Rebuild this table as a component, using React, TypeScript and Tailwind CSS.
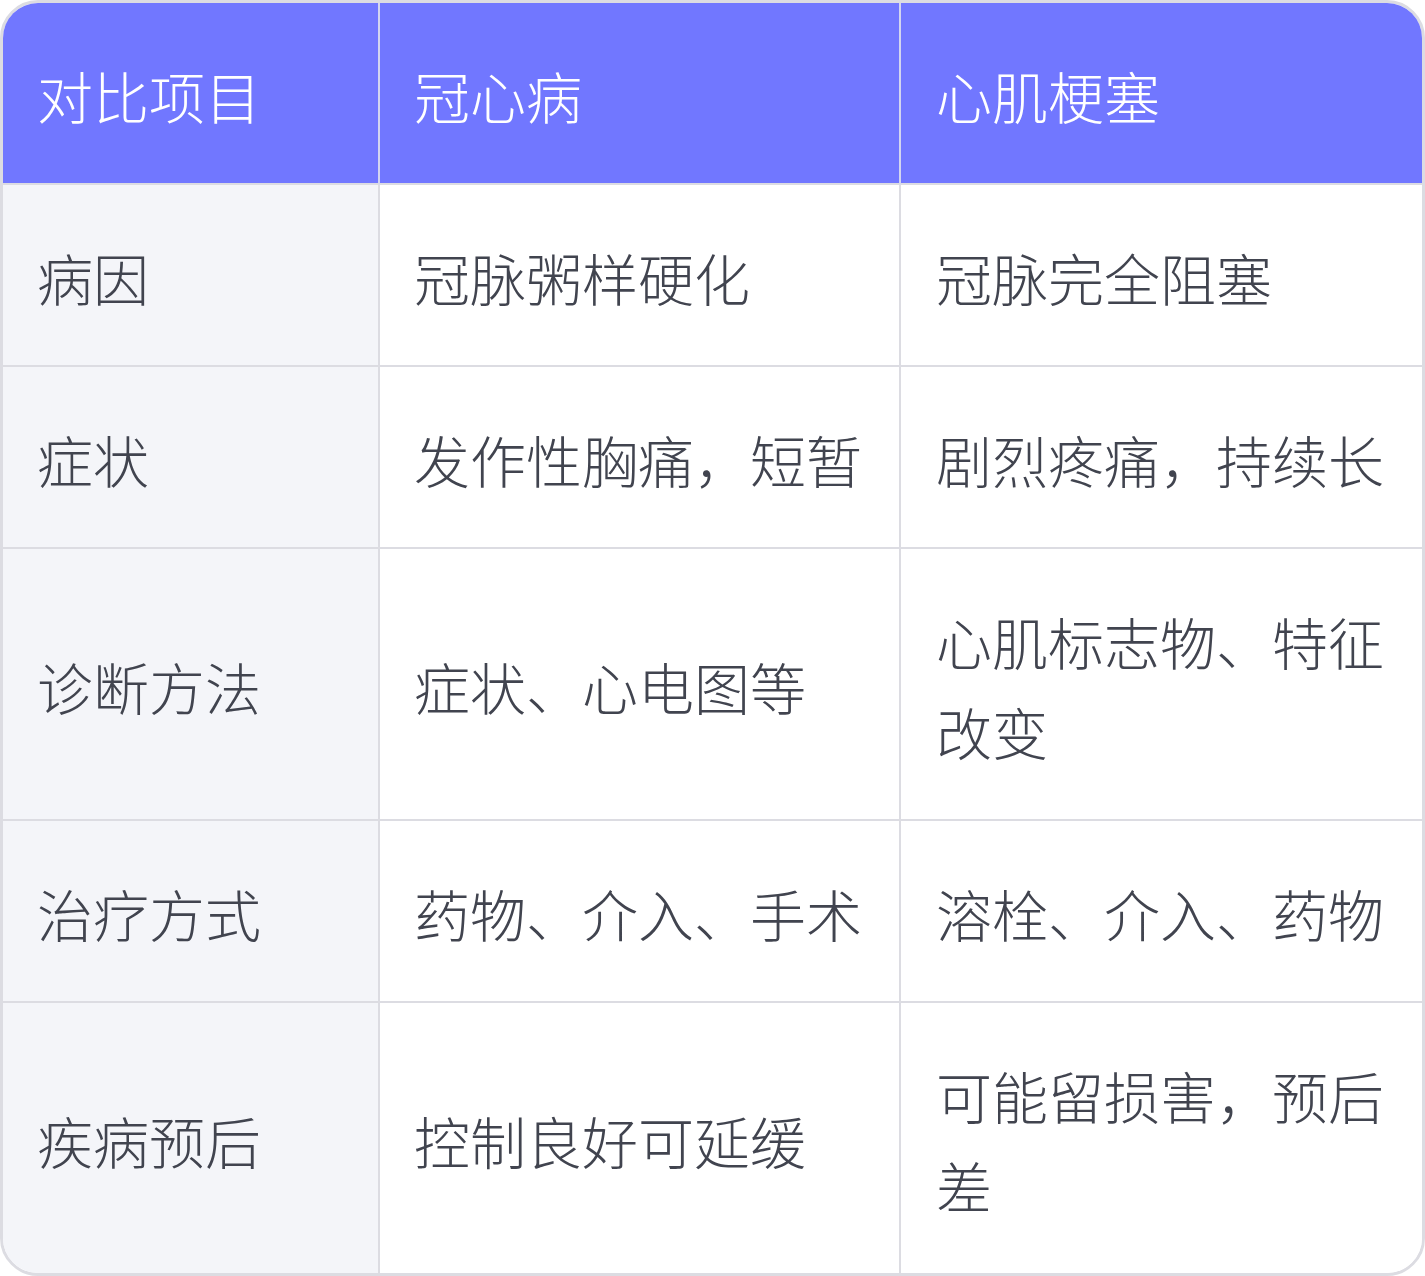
import React from "react";

const rows: [string, string, string][] = [
  ["病因", "冠脉粥样硬化", "冠脉完全阻塞"],
  ["症状", "发作性胸痛，短暂", "剧烈疼痛，持续长"],
  ["诊断方法", "症状、心电图等", "心肌标志物、特征改变"],
  ["治疗方式", "药物、介入、手术", "溶栓、介入、药物"],
  ["疾病预后", "控制良好可延缓", "可能留损害，预后差"],
];

export default function App() {
  return (
    <div
      className="w-[1425px] h-[1276px] bg-white"
      style={{ fontFamily: '"Noto Sans CJK SC", "Noto Sans", sans-serif' }}
    >
      <div className="w-[1425px] border-[3px] border-[#dcdce2] rounded-[38px] overflow-hidden bg-white">
        <div className="grid grid-cols-[377px_521px_1fr] text-[56px] leading-[90px] font-light">
          <div className="bg-[#7177ff] text-white pl-[34px] pr-[33px] pt-[47px] pb-[43px] border-r-2 border-b-2 border-r-[#d3d5f0] border-b-[#dcdce2]">
            对比项目
          </div>
          <div className="bg-[#7177ff] text-white pl-[34px] pr-[33px] pt-[47px] pb-[43px] border-r-2 border-b-2 border-r-[#d3d5f0] border-b-[#dcdce2]">
            冠心病
          </div>
          <div className="bg-[#7177ff] text-white pl-[35px] pr-[33px] pt-[47px] pb-[43px] border-b-2 border-b-[#dcdce2]">
            心肌梗塞
          </div>
          {rows.map((r, i) => {
            const last = i === rows.length - 1;
            return (
              <React.Fragment key={i}>
                <div
                  className={
                    "bg-[#f4f5f9] text-[#41444f] pl-[34px] pr-[33px] pt-[47px] pb-[43px] border-r-2 border-[#dcdce2] flex items-center " +
                    (last ? "" : "border-b-2")
                  }
                >
                  {r[0]}
                </div>
                <div
                  className={
                    "bg-white text-[#41444f] pl-[34px] pr-[33px] pt-[47px] pb-[43px] border-r-2 border-[#dcdce2] flex items-center " +
                    (last ? "" : "border-b-2")
                  }
                >
                  {r[1]}
                </div>
                <div
                  className={
                    "bg-white text-[#41444f] pl-[35px] pr-[33px] pt-[47px] pb-[43px] border-[#dcdce2] flex items-center " +
                    (last ? "" : "border-b-2")
                  }
                >
                  {r[2]}
                </div>
              </React.Fragment>
            );
          })}
        </div>
      </div>
    </div>
  );
}
